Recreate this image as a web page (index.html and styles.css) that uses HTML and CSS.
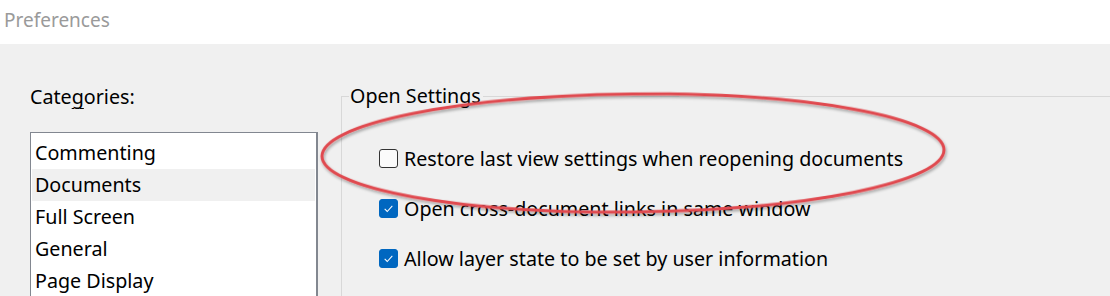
FILE: index.html
```html
<!DOCTYPE html>
<html>
	<head>
		<meta charset="utf-8" />
		<title>Preferences</title>
		<link rel="stylesheet" href="styles.css">
	</head>
	<body>
		<div class="titlebar">Preferences</div>
		<div class="content">
			<div class="categories">
				<div class="label">Cate<u>g</u>ories:</div>
				<ul class="list">
					<li>Commenting</li>
					<li class="current">Documents</li>
					<li>Full Screen</li>
					<li>General</li>
					<li>Page Display</li>
				</ul>
			</div>
			<fieldset class="group">
				<legend>Open Settings</legend>
				<div class="rows">
					<label class="row"><span class="box"></span>Restore last view settings when reopening documents</label>
					<label class="row"><span class="box checked"><svg viewBox="0 0 20 20"><path d="M5.5 10.5 L8.5 13.5 L14.5 7" /></svg></span>Open cross-document links in same window</label>
					<label class="row"><span class="box checked"><svg viewBox="0 0 20 20"><path d="M5.5 10.5 L8.5 13.5 L14.5 7" /></svg></span>Allow layer state to be set by user information</label>
				</div>
			</fieldset>
			<!-- red marker circle drawn over the dialog -->
			<svg class="mark" width="1110" height="296" viewBox="0 0 1110 296">
				<defs>
					<filter id="shade" x="-10%" y="-30%" width="120%" height="160%">
						<feDropShadow dx="1" dy="2" stdDeviation="1.5" flood-color="#000" flood-opacity="0.35" />
					</filter>
				</defs>
				<ellipse cx="633" cy="153" rx="311" ry="59" transform="rotate(-0.6 633 153)" filter="url(#shade)" />
			</svg>
		</div>
	</body>
</html>
```

FILE: styles.css
```css
body,div,ul,li,fieldset,legend{
	margin: 0;
	padding: 0;
}

ul{
	list-style-type: none;
}

body{
	background: #f0f0f0;
	font-family: "Noto Sans", "Open Sans", sans-serif;
	font-size: 19.7px;
	color: #000;
	overflow: hidden;
}

.titlebar{
	height: 44px;
	background: #ffffff;
	color: #9a9a9a;
	font-size: 19px;
	line-height: 40px;
	padding-left: 4px;
}

.content{
	position: relative;
	display: flex;
	height: 252px;
	overflow: hidden;
}

.categories{
	margin-left: 30px;
	width: 288px;
	padding-top: 40px;
}

.categories .label{
	height: 48px;
	line-height: 26px;
}

.categories .label u{
	text-decoration-thickness: 1px;
	text-underline-offset: 4px;
}

.list{
	background: #ffffff;
	border: 1px solid #828790;
	border-right-width: 2px;
	border-bottom: none;
	height: 200px;
	padding: 4px 1px 0 1px;
}

.list li{
	height: 32px;
	line-height: 32px;
	padding-left: 3px;
}

.list li.current{
	background: #f0f0f0;
}

.group{
	flex: 1;
	margin-left: 23px;
	margin-top: 40px;
	border: none;
	border-top: 1px solid #d8d8d8;
	border-left: 1px solid #d8d8d8;
	padding: 0 0 0 3px;
	min-width: 0;
}

.group legend{
	margin-left: 4px;
	padding: 0 2px 0 1px;
	line-height: 24px;
}

.rows{
	padding: 25px 0 0 34px;
}

.row{
	display: flex;
	align-items: center;
	height: 50px;
	white-space: nowrap;
}

.box{
	flex: none;
	box-sizing: border-box;
	width: 19px;
	height: 19px;
	margin-right: 6px;
	border: 1px solid #333;
	border-radius: 3px;
	background: #fbfbfb;
}

.box.checked{
	border-color: #0067c0;
	background: #0067c0;
}

.box svg{
	display: block;
	width: 17px;
	height: 17px;
	fill: none;
	stroke: #ffffff;
	stroke-width: 1.2;
}

.mark{
	position: absolute;
	left: 0;
	top: -44px;
	pointer-events: none;
}

.mark ellipse{
	fill: none;
	stroke: #e04a4f;
	stroke-width: 3;
}
```
